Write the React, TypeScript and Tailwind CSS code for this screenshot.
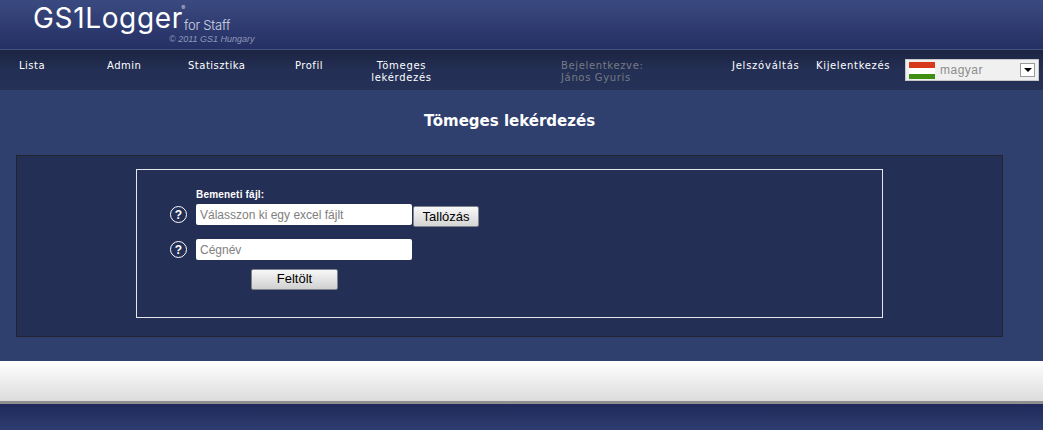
const verdana = "font-['DejaVu_Sans',Verdana,sans-serif]";

const navItems = [
  { label: "Lista", width: "w-[88px]" },
  { label: "Admin", width: "w-[81px]" },
  { label: "Statisztika", width: "w-[107px]" },
  { label: "Profil", width: "w-[76px]" },
];

function HelpIcon() {
  return (
    <div className="flex h-[17px] w-[17px] shrink-0 items-center justify-center rounded-full border-[1.5px] border-white font-['Liberation_Sans',sans-serif] text-[12px] font-bold leading-none text-white">
      ?
    </div>
  );
}

function LanguageSelect() {
  return (
    <div className="flex h-[22px] w-[134px] items-center border border-[#c8c8c8] bg-[#f0f0f0] pl-[3px] pr-[3px]">
      <div className="flex h-[17px] w-[26px] flex-col">
        <div className="h-[6px] bg-[#d8391b]" />
        <div className="h-[6px] bg-white" />
        <div className="h-[5px] bg-[#3f8f12]" />
      </div>
      <span className="ml-[5px] flex-1 font-['Liberation_Sans',sans-serif] text-[12px] text-[#8c8c8c]">magyar</span>
      <div className="flex h-[14px] w-[15px] items-center justify-center border border-[#9a9a9a] bg-white">
        <div className="h-0 w-0 border-x-[4px] border-t-[4px] border-x-transparent border-t-black" />
      </div>
    </div>
  );
}

export default function App() {
  return (
    <div className="h-[430px] w-[1043px] overflow-hidden bg-[#2f3f6e]">
      <header className="h-[50px] border-b border-[#44527e] bg-gradient-to-b from-[#3a4a80] to-[#252f63]">
        <div className="h-[49px] w-[258px] pl-[33px] pt-[3px] text-white">
          <div className="flex h-[30px] items-end font-['Inter',sans-serif]">
            <span className="relative text-[28px] leading-[30px] tracking-[0.65px]">
              GS1Logger
              <span className="absolute -right-[3px] top-[1px] text-[6px] leading-[8px] text-[#c9cedd]">®</span>
            </span>
            <span className="ml-[1px] text-[13px] font-light leading-[16px] tracking-[-0.2px] text-[#d5d9e6]">for Staff</span>
          </div>
          <div className="pl-[136px] pt-[1px] font-['Liberation_Sans',sans-serif] text-[9px] italic leading-[11px] text-[#8f99b8]">
            © 2011 GS1 Hungary
          </div>
        </div>
      </header>

      <nav className={`flex h-[40px] bg-gradient-to-b from-[#1c2442] via-[#232f54] to-[#253157] pl-[19px] text-[10px] leading-[12px] tracking-[0.5px] text-white ${verdana}`}>
        {navItems.map((item) => (
          <a key={item.label} className={`${item.width} pt-[10px]`}>
            {item.label}
          </a>
        ))}
        <a className="w-[190px] pt-[10px] tracking-[0.7px]">
          <span className="block w-[61px] text-center">Tömeges lekérdezés</span>
        </a>
        <div className="w-[171px] pt-[10px] tracking-[0.65px] text-[#777b85]">
          Bejelentkezve:
          <br />
          János Gyuris
        </div>
        <a className="w-[84px] pt-[10px] tracking-[0.75px]">Jelszóváltás</a>
        <a className="w-[89px] pt-[10px] tracking-[0.65px]">Kijelentkezés</a>
        <div className="pt-[9px]">
          <LanguageSelect />
        </div>
      </nav>

      <main className="h-[271px] pl-[16px] pr-[40px]">
        <h1 className={`pt-[21px] text-center text-[15px] font-bold leading-[20px] text-white ${verdana}`}>
          Tömeges lekérdezés
        </h1>
        <section className="mt-[24px] h-[182px] border border-[#22252f] bg-[#232f54] pl-[119px] pt-[13px]">
          <div className="h-[149px] w-[747px] border border-[#e4e6ea] font-['Liberation_Sans',sans-serif]">
            <div className="pl-[59px] pt-[19px] text-[10px] font-bold leading-[12px] tracking-[0.2px] text-white">Bemeneti fájl:</div>
            <div className="mt-[3px] flex pl-[33px]">
              <div className="pt-[2px]">
                <HelpIcon />
              </div>
              <div className="ml-[9px] flex h-[21px] w-[216px] items-center rounded-[2px] bg-white pl-[4px] pt-[1px] text-[12px] text-[#808080]">
                Válasszon ki egy excel fájlt
              </div>
              <button className="ml-[1px] mt-[2px] h-[21px] w-[66px] rounded-[2px] border border-[#7f838c] bg-gradient-to-b from-[#f8f8f8] to-[#d4d4d4] text-[13px] leading-[18px] text-black">
                Tallózás
              </button>
            </div>
            <div className="mt-[12px] flex pl-[33px]">
              <div className="pt-[2px]">
                <HelpIcon />
              </div>
              <div className="ml-[9px] flex h-[21px] w-[216px] items-center rounded-[2px] bg-white pl-[4px] pt-[1px] text-[12px] text-[#808080]">
                Cégnév
              </div>
            </div>
            <div className="mt-[6px] pl-[114px]">
              <button className="h-[21px] w-[87px] rounded-[2px] border border-[#7f838c] bg-gradient-to-b from-[#f8f8f8] to-[#d0d0d0] text-[13px] leading-[18px] text-black">
                Feltölt
              </button>
            </div>
          </div>
        </section>
      </main>

      <div className="h-[43px] border-b-[3px] border-[#8f8f8f] bg-gradient-to-b from-white to-[#dcdcdc]" />
      <div className="h-[26px] bg-gradient-to-b from-[#20295a] to-[#2e3d70]" />
    </div>
  );
}
